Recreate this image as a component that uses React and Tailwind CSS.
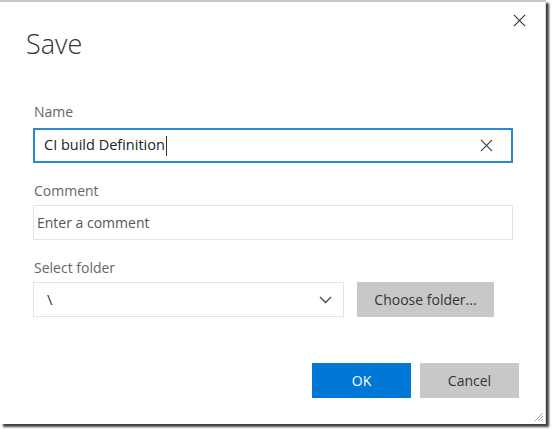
import React from "react";

function XIcon({ size = 14, stroke = "#333", width = 1.3 }) {
  return (
    <svg width={size} height={size} viewBox="0 0 14 14" fill="none">
      <path d="M1 1L13 13M13 1L1 13" stroke={stroke} strokeWidth={width} />
    </svg>
  );
}

export default function App() {
  const font = { fontFamily: '"Segoe UI", "Open Sans", "Noto Sans", sans-serif' };
  return (
    <div className="w-[552px] h-[429px] bg-white overflow-hidden" style={font}>
      <div className="relative w-[546px] h-[424px] bg-white border-t-2 border-[#c6c6c6] border-r border-r-[#d6d6d6] shadow-[3px_3px_2px_rgba(0,0,0,0.75)]">
        <button className="absolute top-[12px] right-[19px] p-0">
          <XIcon size={13} stroke="#333" width={1.2} />
        </button>
        <div className="pl-[26px] pt-[25px]">
          <h1 className="text-[27px] font-light text-[#333] leading-[34px]">Save</h1>
        </div>
        <div className="pl-[33px] pr-[32px] pt-[41px] flex flex-col">
          <label className="text-[14px] text-[#666] leading-[19px] pl-[1px]">Name</label>
          <div className="mt-[7px] h-[35px] w-[480px] border-2 border-[#2b88d8] flex items-center pl-[9px] pr-[18px]">
            <span className="text-[14.5px] text-[#222] leading-none">CI build Definition</span>
            <span className="w-px h-[20px] bg-[#333] ml-[1px]" />
            <span className="flex-1" />
            <XIcon size={13} stroke="#444" width={1.3} />
          </div>
          <label className="mt-[18px] text-[14px] text-[#666] leading-[19px] pl-[1px]">Comment</label>
          <div className="mt-[5px] h-[35px] w-[480px] border border-[#e3e3e3] flex items-center pl-[3px]">
            <span className="text-[14px] text-[#555] leading-none">Enter a comment</span>
          </div>
          <label className="mt-[18px] text-[14px] text-[#666] leading-[19px] pl-[1px]">Select folder</label>
          <div className="mt-[5px] flex gap-[13px]">
            <div className="h-[35px] w-[311px] border border-[#e3e3e3] flex items-center pl-[13px] pr-[11px]">
              <span className="text-[15px] text-[#333] leading-none">\</span>
              <span className="flex-1" />
              <svg width="13" height="8" viewBox="0 0 13 8" fill="none">
                <path d="M1 1L6.5 6.5L12 1" stroke="#444" strokeWidth="1.3" />
              </svg>
            </div>
            <button className="h-[35px] w-[137px] bg-[#c8c8c8] text-[14px] text-[#333] leading-none">
              Choose folder...
            </button>
          </div>
          <div className="mt-[46px] flex justify-end gap-[9px] mr-[-6px]">
            <button className="h-[35px] w-[99px] bg-[#0078d7] text-white text-[14px] leading-none">OK</button>
            <button className="h-[35px] w-[99px] bg-[#c8c8c8] text-[#333] text-[14px] leading-none">Cancel</button>
          </div>
        </div>
        <svg className="absolute right-[1px] bottom-[2px]" width="11" height="11" viewBox="0 0 11 11">
          <path d="M10 2L2 10M10 5L5 10M10 8L8 10" stroke="#a0a0b8" strokeWidth="1" />
        </svg>
      </div>
    </div>
  );
}
